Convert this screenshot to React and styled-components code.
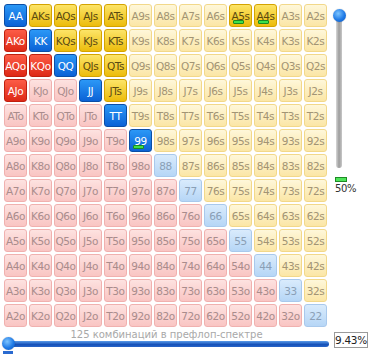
import React from 'react';
import styled, { createGlobalStyle, css } from 'styled-components';

const GlobalStyle = createGlobalStyle`
  html, body {
    margin: 0;
    padding: 0;
    background: #fff;
  }
  body {
    font-family: "DejaVu Sans", Verdana, sans-serif;
  }
`;

const RANKS = ['A', 'K', 'Q', 'J', 'T', '9', '8', '7', '6', '5', '4', '3', '2'];

const SELECTED = new Set([
  'AA', 'KK', 'QQ', 'JJ', 'TT', '99',
  'AKs', 'AQs', 'AJs', 'ATs', 'KQs', 'KJs', 'KTs', 'QJs', 'QTs', 'JTs', 'A5s', 'A4s',
  'AKo', 'AQo', 'KQo', 'AJo',
]);

const PARTIAL = new Set(['A5s', 'A4s', '99']);

const palette = {
  pair: {
    on: css`
      background: linear-gradient(#2b98f6, #0b62d6);
      border-color: #0b4ea6;
      color: #fff;
    `,
    off: css`
      background: linear-gradient(#d9ebfc, #b6d6f6);
      border-color: #a9c9ec;
      color: #8a9fb6;
    `,
  },
  suited: {
    on: css`
      background: linear-gradient(#fce468, #ecbc0c);
      border-color: #d4a300;
      color: #5a4a12;
    `,
    off: css`
      background: linear-gradient(#fef7da, #fbe6a6);
      border-color: #f2d88a;
      color: #a29474;
    `,
  },
  offsuit: {
    on: css`
      background: linear-gradient(#fc5c46, #de2916);
      border-color: #bf200f;
      color: #fff;
    `,
    off: css`
      background: linear-gradient(#fde2e0, #f9c5c3);
      border-color: #f0b1af;
      color: #a98c8c;
    `,
  },
};

const Page = styled.div`
  width: 373px;
  height: 354px;
  overflow: hidden;
  padding: 4px 0 0 4px;
  box-sizing: border-box;
  position: relative;
`;

const TopRow = styled.div`
  display: flex;
  align-items: flex-start;
`;

const Grid = styled.div`
  display: grid;
  grid-template-columns: repeat(13, 23px);
  grid-auto-rows: 23px;
  gap: 2px;
`;

const Cell = styled.div`
  position: relative;
  box-sizing: border-box;
  border: 1px solid;
  border-radius: 3px;
  display: flex;
  align-items: center;
  justify-content: center;
  font-size: 10.5px;
  letter-spacing: -0.4px;
  white-space: nowrap;
  ${({ $kind, $on }) => palette[$kind][$on ? 'on' : 'off']}
`;

const Freq = styled.span`
  position: absolute;
  left: 3px;
  bottom: 2px;
  width: 9px;
  height: 2px;
  background: #3ee04a;
  border: 1px solid #1a8a22;
  border-radius: 1px;
`;

const SideColumn = styled.div`
  margin-left: 5px;
  width: 36px;
  display: flex;
  flex-direction: column;
  align-items: flex-start;
`;

const VTrack = styled.div`
  position: relative;
  margin: 11px 0 0 4px;
  width: 6px;
  height: 153px;
  border-radius: 3px;
  background: linear-gradient(90deg, #d8d8d8, #9c9c9c 50%, #c8c8c8);
`;

const Knob = styled.div`
  position: absolute;
  width: 13px;
  height: 13px;
  border-radius: 50%;
  background: radial-gradient(circle at 40% 35%, #7cc4ff, #1f7ae6 55%, #0c55c0);
  box-shadow: 0 0 1px rgba(0, 0, 0, 0.4);
`;

const VKnob = styled(Knob)`
  left: -3.5px;
  top: -6px;
`;

const Meter = styled.div`
  margin: 9px 0 0 3px;
  width: 10px;
  height: 3px;
  background: #4fe45a;
  border: 1px solid #1d8c25;
`;

const Percent = styled.div`
  margin: 1px 0 0 3px;
  font-size: 10px;
  color: #333;
  letter-spacing: -0.3px;
`;

const Bottom = styled.div`
  display: flex;
  align-items: center;
  margin-top: 0;
`;

const RangeBox = styled.div`
  width: 325px;
  display: flex;
  flex-direction: column;
`;

const Caption = styled.div`
  text-align: center;
  font-size: 10px;
  line-height: 11px;
  color: #a8a8a8;
`;

const HTrack = styled.div`
  position: relative;
  margin-top: 1px;
  height: 6px;
  border-radius: 3px;
  background: linear-gradient(#5a9ae8, #1450b8 60%, #2a66c8);
`;

const HKnob = styled(Knob)`
  left: -2px;
  top: -3.5px;
`;

const ValueBox = styled.div`
  margin-left: 5px;
  margin-top: 5px;
  width: 34px;
  height: 16px;
  box-sizing: border-box;
  border: 1px solid #9a9a9a;
  background: #fff;
  font-size: 10.5px;
  line-height: 14px;
  color: #222;
  text-align: right;
  padding-right: 1px;
  letter-spacing: -0.3px;
`;

const BottomMark = styled.div`
  margin: 3px 0 0 -1px;
  width: 10px;
  height: 3px;
  background: #2a6ad0;
`;

function handName(r, c) {
  if (r === c) return RANKS[r] + RANKS[c];
  if (c > r) return RANKS[r] + RANKS[c] + 's';
  return RANKS[c] + RANKS[r] + 'o';
}

function App() {
  const cells = [];
  for (let r = 0; r < 13; r++) {
    for (let c = 0; c < 13; c++) {
      const name = handName(r, c);
      const kind = r === c ? 'pair' : c > r ? 'suited' : 'offsuit';
      cells.push(
        <Cell key={name} $kind={kind} $on={SELECTED.has(name)}>
          {name}
          {PARTIAL.has(name) && <Freq />}
        </Cell>
      );
    }
  }

  return (
    <Page>
      <GlobalStyle />
      <TopRow>
        <Grid>{cells}</Grid>
        <SideColumn>
          <VTrack>
            <VKnob />
          </VTrack>
          <Meter />
          <Percent>50%</Percent>
        </SideColumn>
      </TopRow>
      <Bottom>
        <RangeBox>
          <Caption>125 комбинаций в префлоп-спектре</Caption>
          <HTrack>
            <HKnob />
          </HTrack>
        </RangeBox>
        <ValueBox>9.43%</ValueBox>
      </Bottom>
      <BottomMark />
    </Page>
  );
}

export default App;
